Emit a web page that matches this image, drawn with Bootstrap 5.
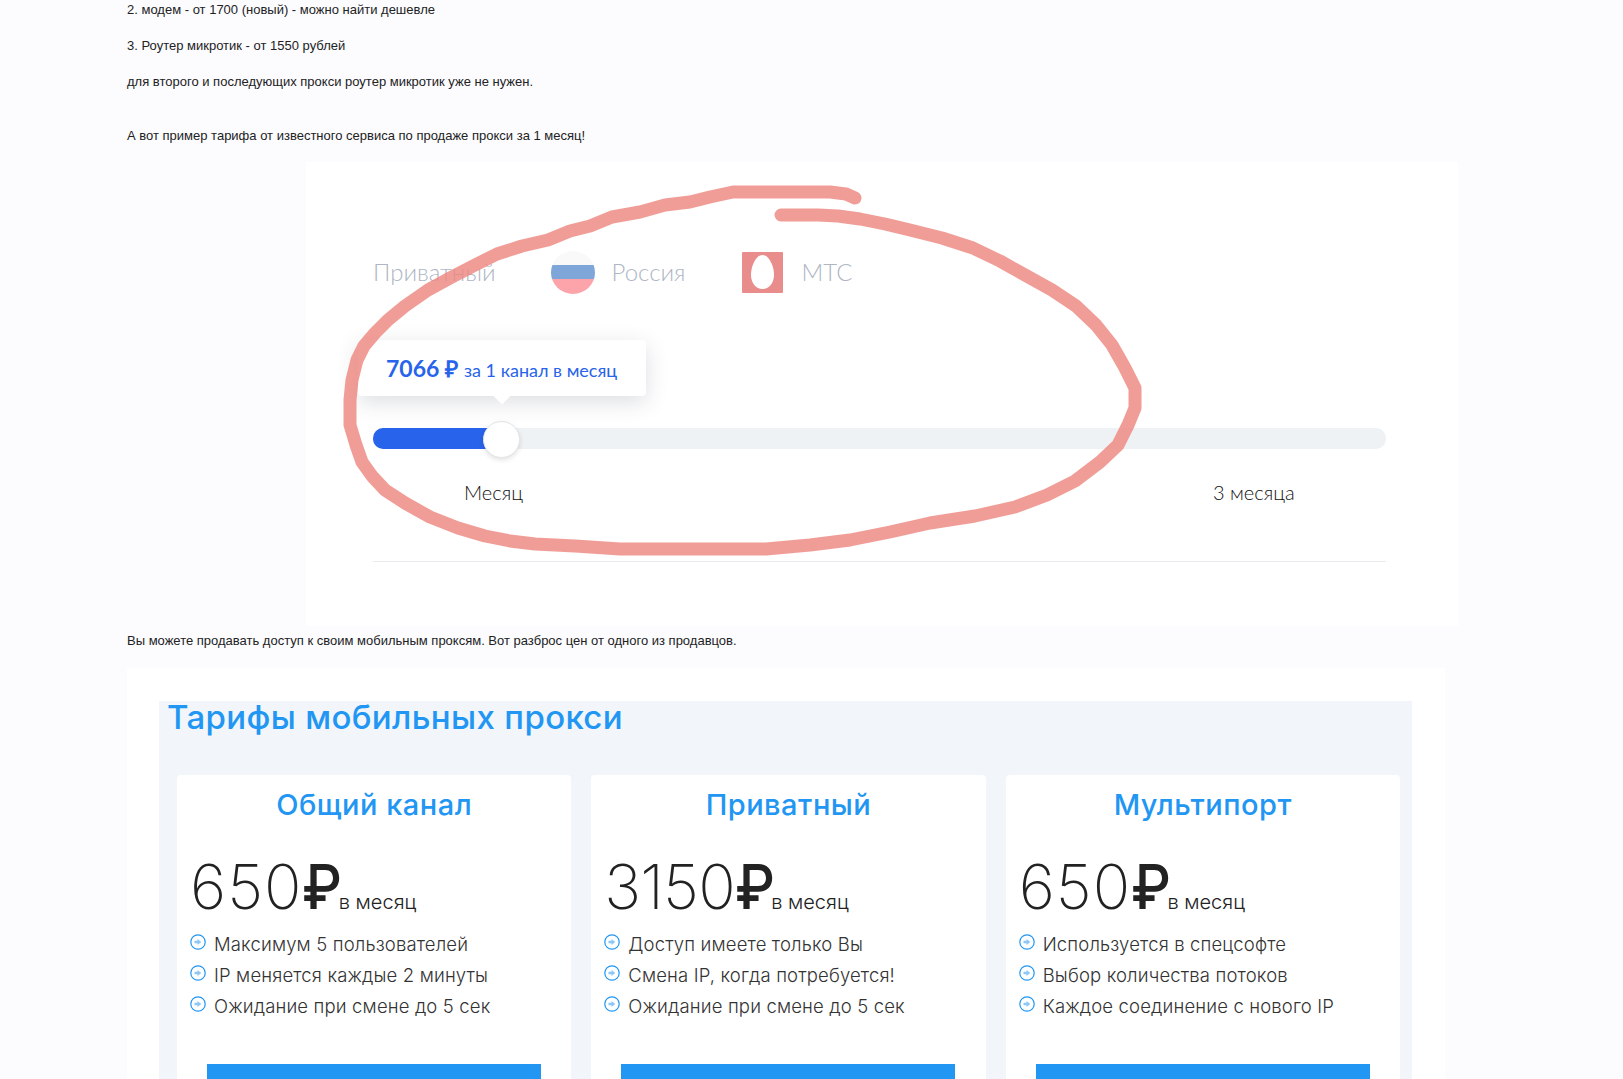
<!DOCTYPE html>
<html lang="ru">
<head>
    <meta charset="UTF-8">
    <meta name="viewport" content="width=device-width, initial-scale=1.0">
    <title>Мобильные прокси</title>
    <link href="https://cdn.jsdelivr.net/npm/bootstrap@5.3.2/dist/css/bootstrap.min.css" rel="stylesheet">
    <style>
        html, body { height: 1079px; overflow: hidden; }
        body {
            background-color: #fcfcff;
            color: #222;
            font-family: "Liberation Sans", Arial, sans-serif;
            font-size: 13px;
        }
        .article { padding-left: 127px; margin-top: -1px; }
        .article-line { height: 36px; line-height: 22px; margin: 0; }
        .article-line.gap-after { height: 54px; }
        .article-line.last { height: 37px; }
        .article-line.lead-in { height: 43px; line-height: 32px; }

        /* first picture */
        .promo-shot {
            position: relative;
            width: 1152px;
            height: 464px;
            margin-left: 306px;
            background: #fff;
            font-family: "Lato", sans-serif;
        }
        .promo-inner { padding: 89px 72px 0 67px; }
        .promo-tags { height: 42px; color: #aeb6c4; font-size: 24px; font-weight: 300; }
        .flag-round { width: 44px; height: 43px; margin-left: 55px; margin-right: 17px; }
        .mts-box { width: 41px; height: 41px; margin-left: 57px; margin-right: 18px; }
        .price-tip {
            position: absolute;
            left: 52px; top: 178px;
            width: 288px; height: 56px;
            border-radius: 4px;
            background: #fff;
            color: #2863eb;
            font-size: 18px;
            box-shadow: 0 6px 22px rgba(40, 50, 70, .16);
            padding-left: 28px;
        }
        .price-tip b { font-size: 23px; margin-right: 6px; font-weight: 700; }
        .tip-note { padding-top: 4px; }
        .price-tip::after {
            content: "";
            position: absolute;
            left: 138px; bottom: -6px;
            width: 12px; height: 12px;
            background: #fff;
            transform: rotate(45deg);
        }
        .range-track {
            position: relative;
            height: 21px;
            margin-top: 135px;
            border-radius: 10px;
            background: #eff2f5;
        }
        .range-fill { height: 100%; border-radius: 10px 0 0 10px; background: #2863eb; }
        .range-thumb {
            position: absolute;
            left: 110px; top: -7px;
            width: 37px; height: 37px;
            border-radius: 50%;
            background: #fff;
            border: 1px solid #e3e5e8;
            box-shadow: 0 2px 5px rgba(0, 0, 0, .12);
        }
        .range-labels { margin-top: 30px; font-size: 20px; font-weight: 300; color: #111; height: 26px; line-height: 26px; }
        .range-labels .lbl-a { margin-left: 91px; }
        .range-labels .lbl-b { margin-left: 690px; }
        .promo-rule { height: 1px; margin-top: 56px; background: #e9ebee; }
        .ink-overlay { position: absolute; left: 0; top: 0; width: 100%; height: 100%; pointer-events: none; }

        /* tariffs */
        .tariffs-wrap {
            width: 1318px;
            margin-left: 127px;
            padding: 33px 33px 0 32px;
            background: #fff;
            height: 500px;
        }
        .tariffs-panel {
            background: #f2f5fa;
            padding: 0 12px 40px 18px;
            font-family: "Inter", sans-serif;
        }
        .tariffs-title {
            margin: 0 0 0 -10px;
            height: 74px;
            font-size: 33px;
            line-height: 32px;
            letter-spacing: .35px;
            font-weight: 500;
            color: #2196f3;
        }
        .plan-row { gap: 20px; }
        .plan-box {
            flex: 1 1 0;
            height: 400px;
            border-radius: 4px;
            background: #fff;
            padding: 12px 0 0;
        }
        .plan-name {
            margin: 0 0 26px;
            text-align: center;
            font-size: 29px;
            line-height: 36px;
            letter-spacing: .5px;
            font-weight: 500;
            color: #2196f3;
        }
        .plan-price { padding-left: 13px; height: 75px; line-height: 76px; color: #222; white-space: nowrap; }
        .plan-price .num { font-size: 62px; font-weight: 200; letter-spacing: 1px; }
        .plan-price .num.tight { letter-spacing: -.8px; }
        .plan-price .rub {
            display: inline-block;
            font-size: 62px;
            font-weight: 500;
            transform: scaleX(.9);
            transform-origin: left center;
            margin-right: -8px;
        }
        .plan-price .per { font-size: 20px; font-weight: 300; }
        .plan-list { margin: 5px 0 0; padding: 0 0 0 13px; list-style: none; }
        .plan-list li { height: 31px; line-height: 31px; font-size: 18.500px; letter-spacing: .15px; font-weight: 300; color: #333; white-space: nowrap; }
        .plan-list svg { width: 16px; height: 16px; margin-right: 8px; vertical-align: 1px; }
        .plan-btn {
            display: block;
            width: 334px;
            height: 50px;
            margin: 42px auto 0;
            border: 0;
            border-radius: 0;
            background: #2196f3;
        }
    </style>
</head>
<body>
    <div class="article">
        <p class="article-line">2. модем - от 1700 (новый) - можно найти дешевле</p>
        <p class="article-line">3. Роутер микротик - от 1550 рублей</p>
        <p class="article-line gap-after">для второго и последующих прокси роутер микротик уже не нужен.</p>
        <p class="article-line last">А вот пример тарифа от известного сервиса по продаже прокси за 1 месяц!</p>
    </div>

    <div class="promo-shot">
        <div class="promo-inner">
            <div class="promo-tags d-flex align-items-center">
                <span>Приватный</span>
                <svg class="flag-round" viewBox="0 0 44 43">
                    <clipPath id="flagClip"><ellipse cx="22" cy="21.500" rx="22" ry="21.500"/></clipPath>
                    <g clip-path="url(#flagClip)">
                        <rect width="44" height="14" fill="#f9f9fa"/>
                        <rect y="14" width="44" height="14" fill="#7fa6d9"/>
                        <rect y="28" width="44" height="15" fill="#fda4aa"/>
                    </g>
                </svg>
                <span>Россия</span>
                <svg class="mts-box" viewBox="0 0 41 41">
                    <rect width="41" height="41" rx="1" fill="#e88c8c"/>
                    <path d="M20.500 3c6.500 0 11.500 11 11.500 20 0 8-5 14-11.500 14S9 31 9 23C9 14 14 3 20.500 3z" fill="#fff"/>
                </svg>
                <span>МТС</span>
            </div>
            <div class="range-track">
                <div class="range-fill" style="width: 12.8%"></div>
                <div class="range-thumb"></div>
            </div>
            <div class="range-labels d-flex">
                <span class="lbl-a">Месяц</span>
                <span class="lbl-b">3 месяца</span>
            </div>
            <div class="promo-rule"></div>
        </div>
        <div class="price-tip d-flex align-items-center"><b>7066 ₽</b> <span class="tip-note">за 1 канал в месяц</span></div>
        <!-- coordinates are page pixels, the viewBox starts at this block's corner -->
        <svg class="ink-overlay" viewBox="306 162 1152 464">
            <path fill="none" stroke="#ee8880" stroke-opacity=".82" stroke-width="13" stroke-linecap="round" stroke-linejoin="round"
                d="M855 198 L846 194 L830 192 L800 192 L760 192 L733 192 L710 197 L690 202 L665 205 L640 212 L612 217 L590 226 L570 231 L548 240 L522 246 L497 254 L475 265 L450 278 L428 290 L405 306 L388 320 L375 333 L364 346 L357 360 L352 380 L350 400 L350 425 L356 445 L362 462 L372 476 L385 490 L405 503 L430 517 L458 528 L485 536 L510 541 L535 544 L575 546 L620 549 L690 549 L766 549 L810 545 L850 540 L890 532 L930 523 L975 516 L1015 507 L1047 495 L1075 481 L1100 462 L1118 445 L1128 425 L1135 408 L1135 388 L1125 368 L1112 345 L1096 325 L1076 306 L1052 290 L1025 275 L1000 261 L973 248 L942 238 L910 230 L885 224 L860 219 L838 216 L818 215 L800 215 L781 215"/>
        </svg>
    </div>

    <div class="article">
        <p class="article-line lead-in">Вы можете продавать доступ к своим мобильным проксям. Вот разброс цен от одного из продавцов.</p>
    </div>

    <div class="tariffs-wrap">
        <div class="tariffs-panel">
            <h2 class="tariffs-title">Тарифы мобильных прокси</h2>
            <div class="plan-row d-flex">
                <div class="plan-box">
                    <h3 class="plan-name">Общий канал</h3>
                    <div class="plan-price"><span class="num">650</span><span class="rub">₽</span><span class="per">в месяц</span></div>
                    <ul class="plan-list">
                        <li><svg viewBox="0 0 16 16"><circle cx="8" cy="8" r="7.200" fill="none" stroke="#2196f3" stroke-width="1.200"/><path d="M4.500 6.800h3V5l3.800 3-3.800 3V9.200h-3z" fill="#8cc8f7"/></svg>Максимум 5 пользователей</li>
                        <li><svg viewBox="0 0 16 16"><circle cx="8" cy="8" r="7.200" fill="none" stroke="#2196f3" stroke-width="1.200"/><path d="M4.500 6.800h3V5l3.800 3-3.800 3V9.200h-3z" fill="#8cc8f7"/></svg>IP меняется каждые 2 минуты</li>
                        <li><svg viewBox="0 0 16 16"><circle cx="8" cy="8" r="7.200" fill="none" stroke="#2196f3" stroke-width="1.200"/><path d="M4.500 6.800h3V5l3.800 3-3.800 3V9.200h-3z" fill="#8cc8f7"/></svg>Ожидание при смене до 5 сек</li>
                    </ul>
                    <button class="btn plan-btn" type="button"></button>
                </div>
                <div class="plan-box">
                    <h3 class="plan-name">Приватный</h3>
                    <div class="plan-price"><span class="num tight">3150</span><span class="rub">₽</span><span class="per">в месяц</span></div>
                    <ul class="plan-list">
                        <li><svg viewBox="0 0 16 16"><circle cx="8" cy="8" r="7.200" fill="none" stroke="#2196f3" stroke-width="1.200"/><path d="M4.500 6.800h3V5l3.800 3-3.800 3V9.200h-3z" fill="#8cc8f7"/></svg>Доступ имеете только Вы</li>
                        <li><svg viewBox="0 0 16 16"><circle cx="8" cy="8" r="7.200" fill="none" stroke="#2196f3" stroke-width="1.200"/><path d="M4.500 6.800h3V5l3.800 3-3.800 3V9.200h-3z" fill="#8cc8f7"/></svg>Смена IP, когда потребуется!</li>
                        <li><svg viewBox="0 0 16 16"><circle cx="8" cy="8" r="7.200" fill="none" stroke="#2196f3" stroke-width="1.200"/><path d="M4.500 6.800h3V5l3.800 3-3.800 3V9.200h-3z" fill="#8cc8f7"/></svg>Ожидание при смене до 5 сек</li>
                    </ul>
                    <button class="btn plan-btn" type="button"></button>
                </div>
                <div class="plan-box">
                    <h3 class="plan-name">Мультипорт</h3>
                    <div class="plan-price"><span class="num">650</span><span class="rub">₽</span><span class="per">в месяц</span></div>
                    <ul class="plan-list">
                        <li><svg viewBox="0 0 16 16"><circle cx="8" cy="8" r="7.200" fill="none" stroke="#2196f3" stroke-width="1.200"/><path d="M4.500 6.800h3V5l3.800 3-3.800 3V9.200h-3z" fill="#8cc8f7"/></svg>Используется в спецсофте</li>
                        <li><svg viewBox="0 0 16 16"><circle cx="8" cy="8" r="7.200" fill="none" stroke="#2196f3" stroke-width="1.200"/><path d="M4.500 6.800h3V5l3.800 3-3.800 3V9.200h-3z" fill="#8cc8f7"/></svg>Выбор количества потоков</li>
                        <li><svg viewBox="0 0 16 16"><circle cx="8" cy="8" r="7.200" fill="none" stroke="#2196f3" stroke-width="1.200"/><path d="M4.500 6.800h3V5l3.800 3-3.800 3V9.200h-3z" fill="#8cc8f7"/></svg>Каждое соединение с нового IP</li>
                    </ul>
                    <button class="btn plan-btn" type="button"></button>
                </div>
            </div>
        </div>
    </div>

    <script src="https://cdn.jsdelivr.net/npm/bootstrap@5.3.2/dist/js/bootstrap.bundle.min.js"></script>
</body>
</html>
